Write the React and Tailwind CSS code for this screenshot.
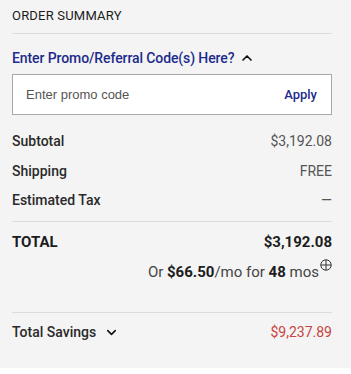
import { ChevronUp, ChevronDown } from 'lucide-react'

const rows = [
  { label: 'Subtotal', value: '$3,192.08' },
  { label: 'Shipping', value: 'FREE' },
  { label: 'Estimated Tax', value: '—' },
]

export default function App() {
  return (
    <div className="w-[351px] h-[374px] bg-white" style={{ fontFamily: 'Roboto, "Noto Sans", sans-serif' }}>
      <div className="h-[368px] bg-[#f4f4f4] pl-3 pr-[19px]">
        {/* Header */}
        <div className="pt-[7px] pb-[9px] border-b border-[#dcdcdc]">
          <p className="text-[13px] leading-[17px] text-[#1c1c1c] tracking-[0.2px]">ORDER SUMMARY</p>
        </div>

        {/* Promo */}
        <button className="mt-[15px] flex items-center gap-[5px] text-[14px] leading-[18px] text-[#1d2b8c] font-medium tracking-[-0.1px]">
          Enter Promo/Referral Code(s) Here?
          <ChevronUp size={16} strokeWidth={2.5} className="text-[#111]" />
        </button>
        <div className="mt-[7px] h-[41px] bg-white border border-[#a8a8a8] flex items-center justify-between pl-[13px] pr-[14px]">
          <span className="text-[13px] text-[#555]" style={{ fontFamily: '"Liberation Sans", Arial, sans-serif' }}>Enter promo code</span>
          <span className="text-[13px] text-[#1d2b8c] font-medium">Apply</span>
        </div>

        {/* Rows */}
        <div className="pt-[17px] pb-[12px] border-b border-[#dcdcdc] flex flex-col gap-[11.5px]">
          {rows.map(({ label, value }) => (
            <div key={label} className="flex justify-between items-center text-[14px] leading-[18px]">
              <span className="text-[#2a2a2a] font-medium">{label}</span>
              <span className="text-[#555]">{value}</span>
            </div>
          ))}
        </div>

        {/* Total */}
        <div className="pt-[10px] pb-[30px] border-b border-[#dcdcdc]">
          <div className="flex justify-between items-center text-[15px] leading-[20px] font-bold text-[#1c1c1c]">
            <span>TOTAL</span>
            <span>$3,192.08</span>
          </div>
          <div className="mt-[10px] flex justify-end items-start text-[15px] leading-[20px] text-[#444]">
            <span>Or <b className="text-[#1c1c1c]">$66.50</b>/mo for <b className="text-[#1c1c1c]">48</b> mos</span>
            <svg width="12" height="12" viewBox="0 0 12 12" className="ml-[1px] -mt-[3px]" fill="none" stroke="#333" strokeWidth="1">
              <circle cx="6" cy="6" r="5.2" />
              <path d="M6 0.8V11.2M0.8 6H11.2" />
            </svg>
          </div>
        </div>

        {/* Savings */}
        <div className="pt-[10px] flex justify-between items-center text-[14px] leading-[18px]">
          <span className="flex items-center gap-[8px] font-medium text-[#2a2a2a]">
            Total Savings
            <ChevronDown size={15} strokeWidth={2.5} className="text-[#111]" />
          </span>
          <span className="text-[#c8453e]">$9,237.89</span>
        </div>
      </div>
    </div>
  )
}
